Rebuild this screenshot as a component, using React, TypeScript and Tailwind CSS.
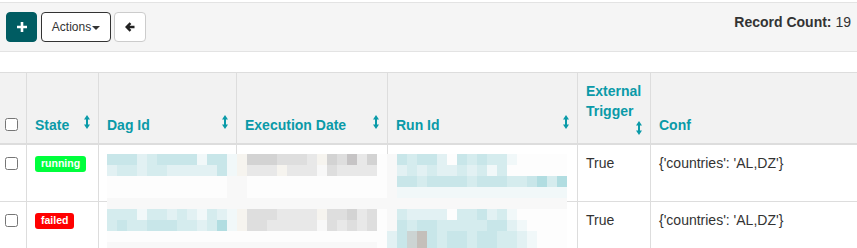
import { ReactNode } from 'react'

const TEAL = 'text-[#0a9aa8]'

const palette: Record<string, string> = {
  w: '#fdfdfd',
  v: '#f8f8f8',
  x: '#f1f8f9',
  a: '#e2f1f3',
  b: '#d5ecee',
  c: '#c8e6e9',
  d: '#b1dde1',
  g: '#e8e8e8',
  h: '#dedede',
  i: '#d3d3d3',
  j: '#c6c4c5',
  k: '#f6f4ef',
  m: '#c4bfba',
  n: '#ccd4d3',
}

// redacted cells (dag id / execution date / run id), one char per 10px block
const mosaic = [
  'cccabccccxcc' + 'xk' + 'iiihhhgkihjgi' + 'wv' + 'cbccawcbcbbxwwwww',
  'abbabbaaaaac' + 'xk' + 'gggkgggvhgggg' + 'wv' + 'ababaababxbwwwwww',
  'wwwwwwwwwwww' + 'vv' + 'wwwwwwwwwwwww' + 'wv' + 'ccbccccbcccbbcdbd',
  'wwwwwwwwwwww' + 'vv' + 'wwwwwwwwwwwww' + 'wv' + 'xxxxxxxxxxxxxxxxx',
  'vvvvvvvvvvvv' + 'vv' + 'vvvvvvvvvvvvv' + 'vv' + 'vvvvvvvvvvvvvvvvv',
  'bbbxbbabaxba' + 'xk' + 'hhhggggkhhigh' + 'wv' + 'baaaawbbcabxwwwww',
  'bcbbcccbbabd' + 'xk' + 'hhgggggvhghgh' + 'wv' + 'cbccbbbbbccaxwwww',
  'wwwwwwwwwwww' + 'ww' + 'wwwwwwwwwwwww' + 'wa' + 'cnmcbccbccbbaxwww',
  'vvvvvvvvvvvv' + 'vv' + 'vvvvvvvvvvvvv' + 'wa' + 'cnmcbccbccbbaxwww',
]

const columns = [
  { label: 'State', width: 'w-[72px]', sort: true },
  { label: 'Dag Id', width: 'w-[138px]', sort: true },
  { label: 'Execution Date', width: 'w-[151px]', sort: true },
  { label: 'Run Id', width: 'w-[190px]', sort: true },
  { label: 'External Trigger', width: 'w-[73px]', sort: true },
  { label: 'Conf', width: '', sort: false },
]

const runs = [
  { state: 'running', badge: 'bg-[#00ff3c]', trigger: 'True', conf: "{'countries': 'AL,DZ'}" },
  { state: 'failed', badge: 'bg-[#ff0000]', trigger: 'True', conf: "{'countries': 'AL,DZ'}" },
]

const SortIcon = () => (
  <svg viewBox="0 0 6 14" className="float-right ml-[4px] block h-[14px] w-[6px] fill-[#0a9aa8]">
    <path d="M0 4.5L3 0l3 4.5H4v5h2L3 14 0 9.5h2v-5z" />
  </svg>
)

const Button = ({ className, children }: { className: string; children: ReactNode }) => (
  <button className={`flex h-[30px] items-center justify-center rounded-[4px] border ${className}`}>
    {children}
  </button>
)

const Toolbar = () => (
  <div className="mt-[2px] flex h-[50px] items-start justify-between border-y border-[#e3e3e3] bg-[#f5f5f5] px-[6px] pt-[9px]">
    <div className="flex gap-[4px]">
      <Button className="w-[31px] border-[#005c62] bg-[#005c62]">
        <svg viewBox="0 0 10 10" className="h-[10px] w-[10px] stroke-white" strokeWidth="2.6">
          <path d="M5 0v10M0 5h10" />
        </svg>
      </Button>
      <Button className="w-[70px] border-[#333] bg-white text-[12px] text-[#333]">
        Actions
        <span className="ml-[1px] mt-[1px] border-x-[4px] border-t-[4px] border-x-transparent border-t-[#333]" />
      </Button>
      <Button className="ml-[-1px] w-[32px] border-[#ccc] bg-white">
        <svg viewBox="0 0 10 10" className="h-[10px] w-[10px] fill-none stroke-[#222]" strokeWidth="2.4">
          <path d="M5.5 1.2L1.7 5l3.8 3.8M2 5h7.5" />
        </svg>
      </Button>
    </div>
    <div className="leading-5">
      <b>Record Count:</b> 19
    </div>
  </div>
)

const Mosaic = () => (
  <svg
    width="460"
    height="94"
    viewBox="0 0 460 94"
    shapeRendering="crispEdges"
    className="absolute left-[107px] top-[154px]"
  >
    {mosaic.map((row, r) =>
      row.split('').map((key, k) => (
        <rect key={`${r}-${k}`} x={k * 10} y={r * 11} width="10" height="11" fill={palette[key]} />
      ))
    )}
  </svg>
)

export default function App() {
  return (
    <div className="relative h-[248px] w-[857px] overflow-hidden bg-white font-['Liberation_Sans',Arial,sans-serif] text-[14px] text-[#333]">
      <Toolbar />
      <table className="mt-[20px] w-[857px] table-fixed border-separate border-spacing-0">
        <thead>
          <tr>
            <th className="h-[73px] w-[27px] border-y border-b-2 border-r border-[#ddd] bg-[#f2f2f2] px-[5px] pb-[12px] align-bottom">
              <input type="checkbox" className="m-0 block h-[13px] w-[13px]" />
            </th>
            {columns.map((col) => (
              <th
                key={col.label}
                className={`${col.width} h-[73px] border-y border-b-2 border-[#ddd] bg-[#f2f2f2] px-2 pb-2 pt-[6px] text-left align-bottom font-bold leading-5 ${TEAL} ${col.sort ? 'border-r' : ''}`}
              >
                {col.label}
                {col.sort && <SortIcon />}
              </th>
            ))}
          </tr>
        </thead>
        <tbody>
          {runs.map((run, i) => (
            <tr key={i}>
              <td className="h-[57px] border-b border-r border-[#ddd] px-[5px] pt-2 align-top">
                <input type="checkbox" className="m-0 mt-[4px] block h-[13px] w-[13px]" />
              </td>
              <td className="border-b border-r border-[#ddd] p-2 align-top leading-5">
                <span
                  className={`mt-[3px] inline-block rounded-[3px] px-[6px] pb-[3px] pt-[2px] align-top text-[10.5px] font-bold leading-[11px] text-white ${run.badge}`}
                >
                  {run.state}
                </span>
              </td>
              <td className="border-b border-r border-[#ddd] p-2 align-top leading-5" />
              <td className="border-b border-r border-[#ddd] p-2 align-top leading-5" />
              <td className="border-b border-r border-[#ddd] p-2 align-top leading-5" />
              <td className="border-b border-r border-[#ddd] p-2 align-top leading-5">{run.trigger}</td>
              <td className="border-b border-[#ddd] p-2 align-top leading-5">{run.conf}</td>
            </tr>
          ))}
        </tbody>
      </table>
      <Mosaic />
    </div>
  )
}
